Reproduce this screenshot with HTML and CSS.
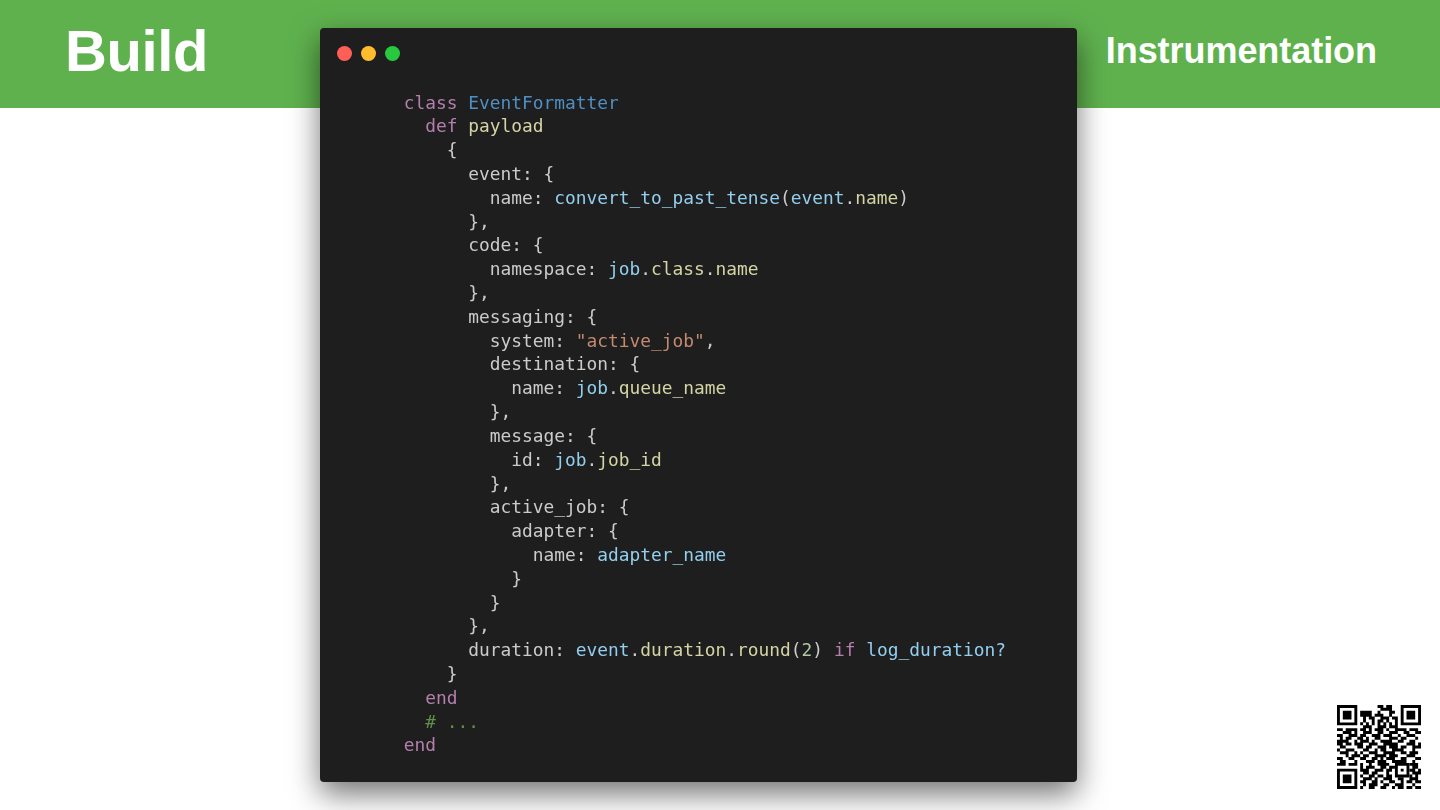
FILE: index.html
```html
<!DOCTYPE html>
<html lang="en">
<head>
<meta charset="utf-8">
<title>Build - Instrumentation</title>
<link rel="stylesheet" href="styles.css">
</head>
<body>
<header class="banner">
  <h1 class="section">Build</h1>
  <h2 class="topic">Instrumentation</h2>
</header>
<main class="content">
  <section class="window">
    <div class="dots">
      <span class="dot red"></span>
      <span class="dot yellow"></span>
      <span class="dot green"></span>
    </div>
    <div class="code">
      <div class="line"><span class="kw">class</span> <span class="cls">EventFormatter</span></div>
      <div class="line">  <span class="kw">def</span> <span class="fn">payload</span></div>
      <div class="line">    {</div>
      <div class="line">      event: {</div>
      <div class="line">        name: <span class="var">convert_to_past_tense</span>(<span class="var">event</span>.<span class="fn">name</span>)</div>
      <div class="line">      },</div>
      <div class="line">      code: {</div>
      <div class="line">        namespace: <span class="var">job</span>.<span class="fn">class</span>.<span class="fn">name</span></div>
      <div class="line">      },</div>
      <div class="line">      messaging: {</div>
      <div class="line">        system: <span class="str">"active_job"</span>,</div>
      <div class="line">        destination: {</div>
      <div class="line">          name: <span class="var">job</span>.<span class="fn">queue_name</span></div>
      <div class="line">        },</div>
      <div class="line">        message: {</div>
      <div class="line">          id: <span class="var">job</span>.<span class="fn">job_id</span></div>
      <div class="line">        },</div>
      <div class="line">        active_job: {</div>
      <div class="line">          adapter: {</div>
      <div class="line">            name: <span class="var">adapter_name</span></div>
      <div class="line">          }</div>
      <div class="line">        }</div>
      <div class="line">      },</div>
      <div class="line">      duration: <span class="var">event</span>.<span class="fn">duration</span>.<span class="fn">round</span>(<span class="num">2</span>) <span class="kw">if</span> <span class="var">log_duration?</span></div>
      <div class="line">    }</div>
      <div class="line">  <span class="kw">end</span></div>
      <div class="line">  <span class="com"># ...</span></div>
      <div class="line"><span class="kw">end</span></div>
    </div>
  </section>
</main>
<svg class="qr" viewBox="0 0 29 29" aria-label="QR code">
  <path class="finder" d="M0 0h7v7h-7zM1 1v5h5v-5zM2 2h3v3h-3zM22 0h7v7h-7zM23 1v5h5v-5zM24 2h3v3h-3zM0 22h7v7h-7zM1 23v5h5v-5zM2 24h3v3h-3z"/>
  <path class="finder" d="M20 20h5v5h-5zM21 21v3h3v-3zM22 22h1v1h-1z"/>
  <path class="mods" d="M14 .5h2M17 .5h2
  M15 1.5h4
  M8 2.5h4M14 2.5h1M18 2.5h2
  M8 3.5h4M13 3.5h3M18 3.5h1
  M9 4.5h1M11 4.5h2M15 4.5h3M19 4.5h2
  M9 5.5h1M12 5.5h1M14 5.5h2M17 5.5h1M20 5.5h1
  M8 6.5h1M10 6.5h1M12 6.5h1M14 6.5h1M16 6.5h1M18 6.5h1M20 6.5h1
  M9 7.5h3M14 7.5h3M18 7.5h3
  M0 8.5h2M3 8.5h4M8 8.5h2M11 8.5h1M13 8.5h3M17 8.5h1M20 8.5h4M25 8.5h3
  M2 9.5h3M6 9.5h1M9 9.5h3M14 9.5h2M18 9.5h3M23 9.5h2M27 9.5h2
  M0 10.5h2M4 10.5h3M8 10.5h2M12 10.5h3M16 10.5h3M21 10.5h1M24 10.5h3
  M1 11.5h1M3 11.5h2M7 11.5h2M10 11.5h1M13 11.5h2M18 11.5h3M22 11.5h2M27 11.5h1
  M0 12.5h4M6 12.5h1M8 12.5h3M12 12.5h1M15 12.5h4M21 12.5h2M25 12.5h2
  M0 13.5h2M3 13.5h2M6 13.5h3M11 13.5h3M16 13.5h5M24 13.5h3M28 13.5h1
  M1 14.5h2M7 14.5h2M10 14.5h2M14 14.5h3M18 14.5h3M22 14.5h2M26 14.5h3
  M0 15.5h1M3 15.5h3M9 15.5h2M13 15.5h1M15 15.5h2M19 15.5h4M26 15.5h1
  M1 16.5h3M6 16.5h1M8 16.5h1M11 16.5h3M16 16.5h4M22 16.5h2M25 16.5h3
  M3 17.5h1M5 17.5h3M9 17.5h2M13 17.5h4M18 17.5h3M24 17.5h3
  M0 18.5h2M4 18.5h2M8 18.5h2M12 18.5h2M15 18.5h1M17 18.5h3M22 18.5h2M27 18.5h2
  M1 19.5h2M6 19.5h1M10 19.5h3M14 19.5h3M19 19.5h5M26 19.5h1
  M0 20.5h3M4 20.5h3M8 20.5h1M11 20.5h1M14 20.5h4M25 20.5h3
  M8 21.5h1M10 21.5h3M15 21.5h2M18 21.5h2M26 21.5h2
  M8 22.5h3M13 22.5h3M17 22.5h2M25 22.5h2M28 22.5h1
  M9 23.5h2M12 23.5h2M17 23.5h1M26 23.5h3
  M8 24.5h1M11 24.5h2M14 24.5h2M17 24.5h2M25 24.5h1M27 24.5h1
  M9 25.5h3M13 25.5h1M16 25.5h3M21 25.5h2M25 25.5h3
  M8 26.5h2M12 26.5h2M15 26.5h1M18 26.5h2M22 26.5h1M24 26.5h2M27 26.5h2
  M9 27.5h1M11 27.5h3M16 27.5h2M20 27.5h3M26 27.5h1
  M8 28.5h1M11 28.5h2M15 28.5h2M19 28.5h1M21 28.5h2M24 28.5h2M27 28.5h2"/>
</svg>
</body>
</html>
```
FILE: styles.css
```css
* { box-sizing: border-box; }
html, body { margin: 0; height: 100%; }
body {
  background: #fff;
  overflow: hidden;
  font-family: "Liberation Sans", Arial, sans-serif;
  position: relative;
}
.banner {
  height: 108px;
  background: #5fb14e;
  color: #fff;
  display: flex;
  justify-content: space-between;
  align-items: flex-start;
  padding: 0 63px 0 65px;
}
.section {
  margin: 17px 0 0;
  font-size: 58px;
  line-height: 68px;
  font-weight: 700;
  letter-spacing: -.4px;
}
.topic {
  margin: 29px 0 0;
  font-size: 36px;
  line-height: 44px;
  font-weight: 700;
  letter-spacing: -.05px;
}
.content {
  margin: -80px 0 0 320px;
}
.window {
  width: 757px;
  height: 754px;
  background: #1e1e1e;
  border-radius: 4px;
  box-shadow: 0 12px 30px rgba(0, 0, 0, .55);
  padding: 17.5px 0 0 17px;
}
.dots {
  display: flex;
  gap: 9px;
  height: 16px;
}
.dot {
  width: 15px;
  height: 15px;
  border-radius: 50%;
}
.red { background: #ff5f56; }
.yellow { background: #ffbd2e; }
.green { background: #27c93f; }
.code {
  margin: 29px 0 0 66.7px;
  font-family: "DejaVu Sans Mono", "Liberation Mono", monospace;
  font-size: 17.87px;
  color: #cbcbcb;
  filter: blur(.3px);
}
.line {
  height: 23.82px;
  line-height: 23.82px;
  white-space: pre;
}
.kw { color: #b57fad; }
.cls { color: #4f8fc4; }
.fn { color: #d4d4a5; }
.var { color: #92cfee; }
.str { color: #c48a70; }
.num { color: #b0c8a3; }
.com { color: #5f8f4c; }
.qr {
  position: absolute;
  left: 1337px;
  top: 705px;
  width: 84px;
  height: 84px;
}
.finder { fill: #000; fill-rule: evenodd; }
.mods { fill: none; stroke: #000; stroke-width: 1.03; }
```
